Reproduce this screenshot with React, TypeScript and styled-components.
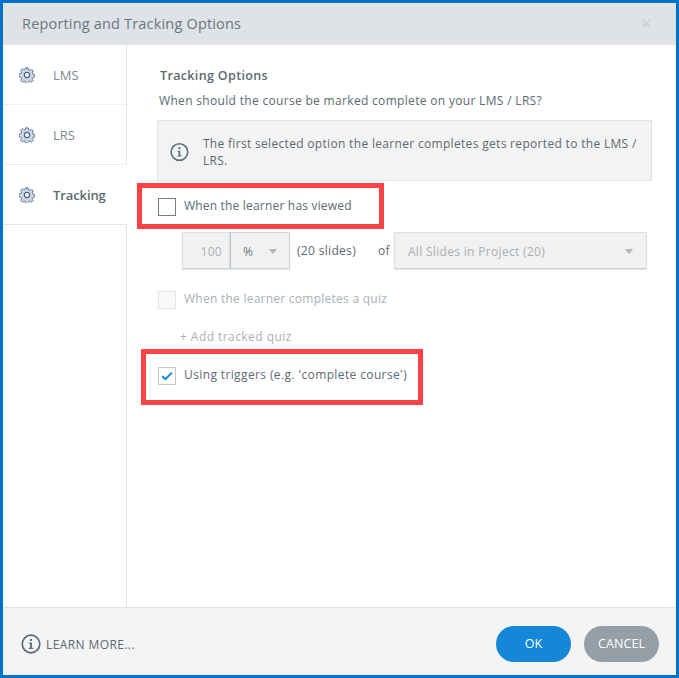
import React, { FC } from 'react'
import styled, { createGlobalStyle } from 'styled-components'
import { X } from 'lucide-react'

const GlobalStyle = createGlobalStyle`
  html, body {
    margin: 0;
    padding: 0;
    background: #ffffff;
  }

  * {
    box-sizing: border-box;
  }
`

const Dialog = styled.div`
  position: relative;
  display: flex;
  flex-flow: column nowrap;
  width: 679px;
  height: 678px;
  border: 3px solid #0072c6;
  background-color: #ffffff;
  color: #5b6a73;
  font-family: "Open Sans", "Noto Sans", sans-serif;
  font-size: 12px;
  letter-spacing: 0.32px;
`

const Header = styled.header`
  display: flex;
  flex-flow: row nowrap;
  align-items: center;
  justify-content: space-between;
  flex: 0 0 42px;
  padding: 0 23px 2px 19px;
  background-color: #dfe3e7;
`

const Title = styled.div`
  color: #69777f;
  font-size: 14.5px;
  letter-spacing: 0.18px;
`

const Body = styled.div`
  display: flex;
  flex-flow: row nowrap;
  flex: 1 1 auto;
  min-height: 0;
`

const Sidebar = styled.nav`
  display: flex;
  flex-flow: column nowrap;
  flex: 0 0 124px;
  border-right: 1px solid #e3e7ea;
`

const Tab = styled.div<{ $active?: boolean }>`
  display: flex;
  flex-flow: row nowrap;
  align-items: center;
  gap: 18px;
  height: 60px;
  margin-right: ${({ $active }) => ($active ? '-1px' : '0')};
  padding-left: 16px;
  border-bottom: 1px solid ${({ $active }) => ($active ? '#e3e7ea' : '#eef0f2')};
  background-color: #ffffff;
  color: ${({ $active }) => ($active ? '#5b6a73' : '#7b8890')};
  font-size: 13px;
  font-weight: ${({ $active }) => ($active ? 600 : 400)};
  letter-spacing: ${({ $active }) => ($active ? '-0.1px' : '0')};
`

const Content = styled.main`
  display: flex;
  flex-flow: column nowrap;
  flex: 1 1 auto;
  padding: 22px 24px 0 30px;
`

const Heading = styled.h2`
  margin: 0 0 0 3px;
  color: #5b6a73;
  font-size: 12.5px;
  font-weight: 600;
  line-height: 18px;
  letter-spacing: 0.35px;
`

const Question = styled.p`
  margin: 7px 0 0 2px;
  font-size: 12px;
  line-height: 17px;
`

const Notice = styled.div`
  display: flex;
  flex-flow: row nowrap;
  align-items: center;
  gap: 14px;
  height: 61px;
  margin-top: 11px;
  padding: 2px 12px 0;
  border: 1px solid #dfe3e7;
  background-color: #f3f3f3;
  line-height: 17px;
`

const NoticeText = styled.span`
  flex: 1 1 auto;
`

const CheckRow = styled.label<{ $disabled?: boolean; $top: number; $spacing: number }>`
  display: flex;
  flex-flow: row nowrap;
  align-items: flex-start;
  gap: 8px;
  height: 18px;
  margin-top: ${({ $top }) => $top}px;
  margin-left: 1px;
  color: ${({ $disabled }) => ($disabled ? '#a9b0b5' : '#5b6a73')};
  line-height: 15px;
  letter-spacing: ${({ $spacing }) => $spacing}px;
`

const Box = styled.span<{ $tone: 'plain' | 'disabled' | 'checked' }>`
  display: flex;
  align-items: center;
  justify-content: center;
  flex: 0 0 18px;
  width: 18px;
  height: 18px;
  border: 1px solid ${({ $tone }) => ($tone === 'plain' ? '#7a7a7a' : $tone === 'disabled' ? '#e3e6e8' : '#c3cacf')};
  background-color: ${({ $tone }) => ($tone === 'disabled' ? '#f8f8f8' : '#ffffff')};
`

const FieldRow = styled.div`
  display: flex;
  flex-flow: row nowrap;
  align-items: center;
  height: 37px;
  margin-top: 16px;
  margin-left: 25px;
`

const Field = styled.div<{ $width: number; $pad: number }>`
  display: flex;
  flex-flow: row nowrap;
  align-items: center;
  justify-content: space-between;
  width: ${({ $width }) => $width}px;
  height: 37px;
  padding: 1px ${({ $pad }) => $pad}px 0;
  border: 1px solid #dbe0e3;
  border-bottom-color: #c9d1d6;
  background-color: #f1f1f1;
  color: #a9b0b5;
  box-shadow: 0 1px 1px rgba(150, 165, 175, 0.25);
`

const UnitField = styled(Field)`
  border-color: #cfd7dc;
  border-left-color: #b9c5cc;
  color: #6d7a82;
`

const Caret = styled.span`
  width: 0;
  height: 0;
  border-left: 4.5px solid transparent;
  border-right: 4.5px solid transparent;
  border-top: 5px solid #b0b6ba;
`

const RowLabel = styled.span<{ $left: number; $right: number }>`
  margin-left: ${({ $left }) => $left}px;
  margin-right: ${({ $right }) => $right}px;
`

const AddLink = styled.div`
  margin-top: 19px;
  margin-left: 23px;
  color: #a9b0b5;
  line-height: 17px;
  letter-spacing: 0.44px;
`

const Footer = styled.footer`
  display: flex;
  flex-flow: row nowrap;
  align-items: center;
  justify-content: space-between;
  flex: 0 0 68px;
  padding: 4px 17px 0 18px;
  border-top: 1px solid #e0e3e6;
  background-color: #f4f4f4;
`

const LearnMore = styled.div`
  display: flex;
  flex-flow: row nowrap;
  align-items: center;
  gap: 5px;
  font-size: 12px;
  letter-spacing: 0.4px;
`

const LearnLabel = styled.span`
  padding-top: 2px;
`

const Actions = styled.div`
  display: flex;
  flex-flow: row nowrap;
  gap: 13px;
`

const Pill = styled.button<{ $primary?: boolean }>`
  width: 75px;
  height: 36px;
  padding: 0;
  border: 0;
  border-radius: 18px;
  background-color: ${({ $primary }) => ($primary ? '#1587d9' : '#959fa7')};
  color: #ffffff;
  font-family: inherit;
  font-size: 12.5px;
  letter-spacing: 0.1px;
`

const Callout = styled.div<{ $left: number; $top: number; $width: number; $height: number }>`
  position: absolute;
  left: ${({ $left }) => $left}px;
  top: ${({ $top }) => $top}px;
  width: ${({ $width }) => $width}px;
  height: ${({ $height }) => $height}px;
  border: 5px solid #fd4145;
  pointer-events: none;
`

const Gear: FC = () => (
  <svg width="16" height="16" viewBox="0 0 16 16" fill="none">
    <path
      d="M6.8.8h2.4l.4 2 1.3.6 1.8-1.1 1.7 1.7-1.1 1.8.5 1.3 2 .4v2.4l-2 .5-.5 1.2 1.1 1.8-1.7 1.7-1.8-1.1-1.3.5-.4 2H6.8l-.4-2-1.3-.5-1.8 1.1-1.7-1.7 1.1-1.8-.5-1.2-2-.5V6.8l2-.4.5-1.3-1.1-1.8 1.7-1.7 1.8 1.1 1.3-.6z"
      fill="#c9d6e8"
      stroke="#4f6378"
      strokeWidth="1"
      strokeDasharray="2 .6"
    />
    <circle cx="8" cy="8" r="2.6" fill="#ffffff" stroke="#4f6378" strokeWidth="1.1" />
  </svg>
)

const InfoIcon: FC = () => (
  <svg width="20" height="20" viewBox="0 0 20 20" fill="none">
    <circle cx="10" cy="10" r="8.8" stroke="#5b6d78" strokeWidth="1.7" />
    <circle cx="10" cy="5.9" r="1.2" fill="#5b6d78" />
    <path d="M8 8.6h2.9v5.2H12.2v1.1H7.8v-1.1h1.3V9.7H8z" fill="#5b6d78" />
  </svg>
)

const Tick: FC = () => (
  <svg width="12" height="10" viewBox="0 0 12 10" fill="none">
    <path d="M1.2 5.2 4.4 8.2 10.8 1.6" stroke="#1587d9" strokeWidth="2" />
  </svg>
)

const App: FC = () => (
  <>
    <GlobalStyle />
    <Dialog>
      <Header>
        <Title>Reporting and Tracking Options</Title>
        <X size={13} color="#cfd3d6" strokeWidth={3.5} />
      </Header>
      <Body>
        <Sidebar>
          <Tab><Gear />LMS</Tab>
          <Tab><Gear />LRS</Tab>
          <Tab $active><Gear />Tracking</Tab>
        </Sidebar>
        <Content>
          <Heading>Tracking Options</Heading>
          <Question>When should the course be marked complete on your LMS / LRS?</Question>
          <Notice>
            <InfoIcon />
            <NoticeText>The first selected option the learner completes gets reported to the LMS / LRS.</NoticeText>
          </Notice>
          <CheckRow $top={17} $spacing={0.19}>
            <Box $tone="plain" />
            When the learner has viewed
          </CheckRow>
          <FieldRow>
            <Field $width={48} $pad={7}><span />100</Field>
            <UnitField $width={60} $pad={12}>%<Caret /></UnitField>
            <RowLabel $left={7} $right={22}>(20 slides)</RowLabel>
            <RowLabel $left={0} $right={4}>of</RowLabel>
            <Field $width={253} $pad={13}>All Slides in Project (20)<Caret /></Field>
          </FieldRow>
          <CheckRow $disabled $top={22} $spacing={0.25}>
            <Box $tone="disabled" />
            When the learner completes a quiz
          </CheckRow>
          <AddLink>+ Add tracked quiz</AddLink>
          <CheckRow $top={22} $spacing={0.38}>
            <Box $tone="checked"><Tick /></Box>
            Using triggers (e.g. 'complete course')
          </CheckRow>
        </Content>
      </Body>
      <Footer>
        <LearnMore><InfoIcon /><LearnLabel>LEARN MORE...</LearnLabel></LearnMore>
        <Actions>
          <Pill $primary>OK</Pill>
          <Pill>CANCEL</Pill>
        </Actions>
      </Footer>
      <Callout $left={134} $top={180} $width={247} $height={46} />
      <Callout $left={138} $top={346} $width={282} $height={56} />
    </Dialog>
  </>
)

export default App
